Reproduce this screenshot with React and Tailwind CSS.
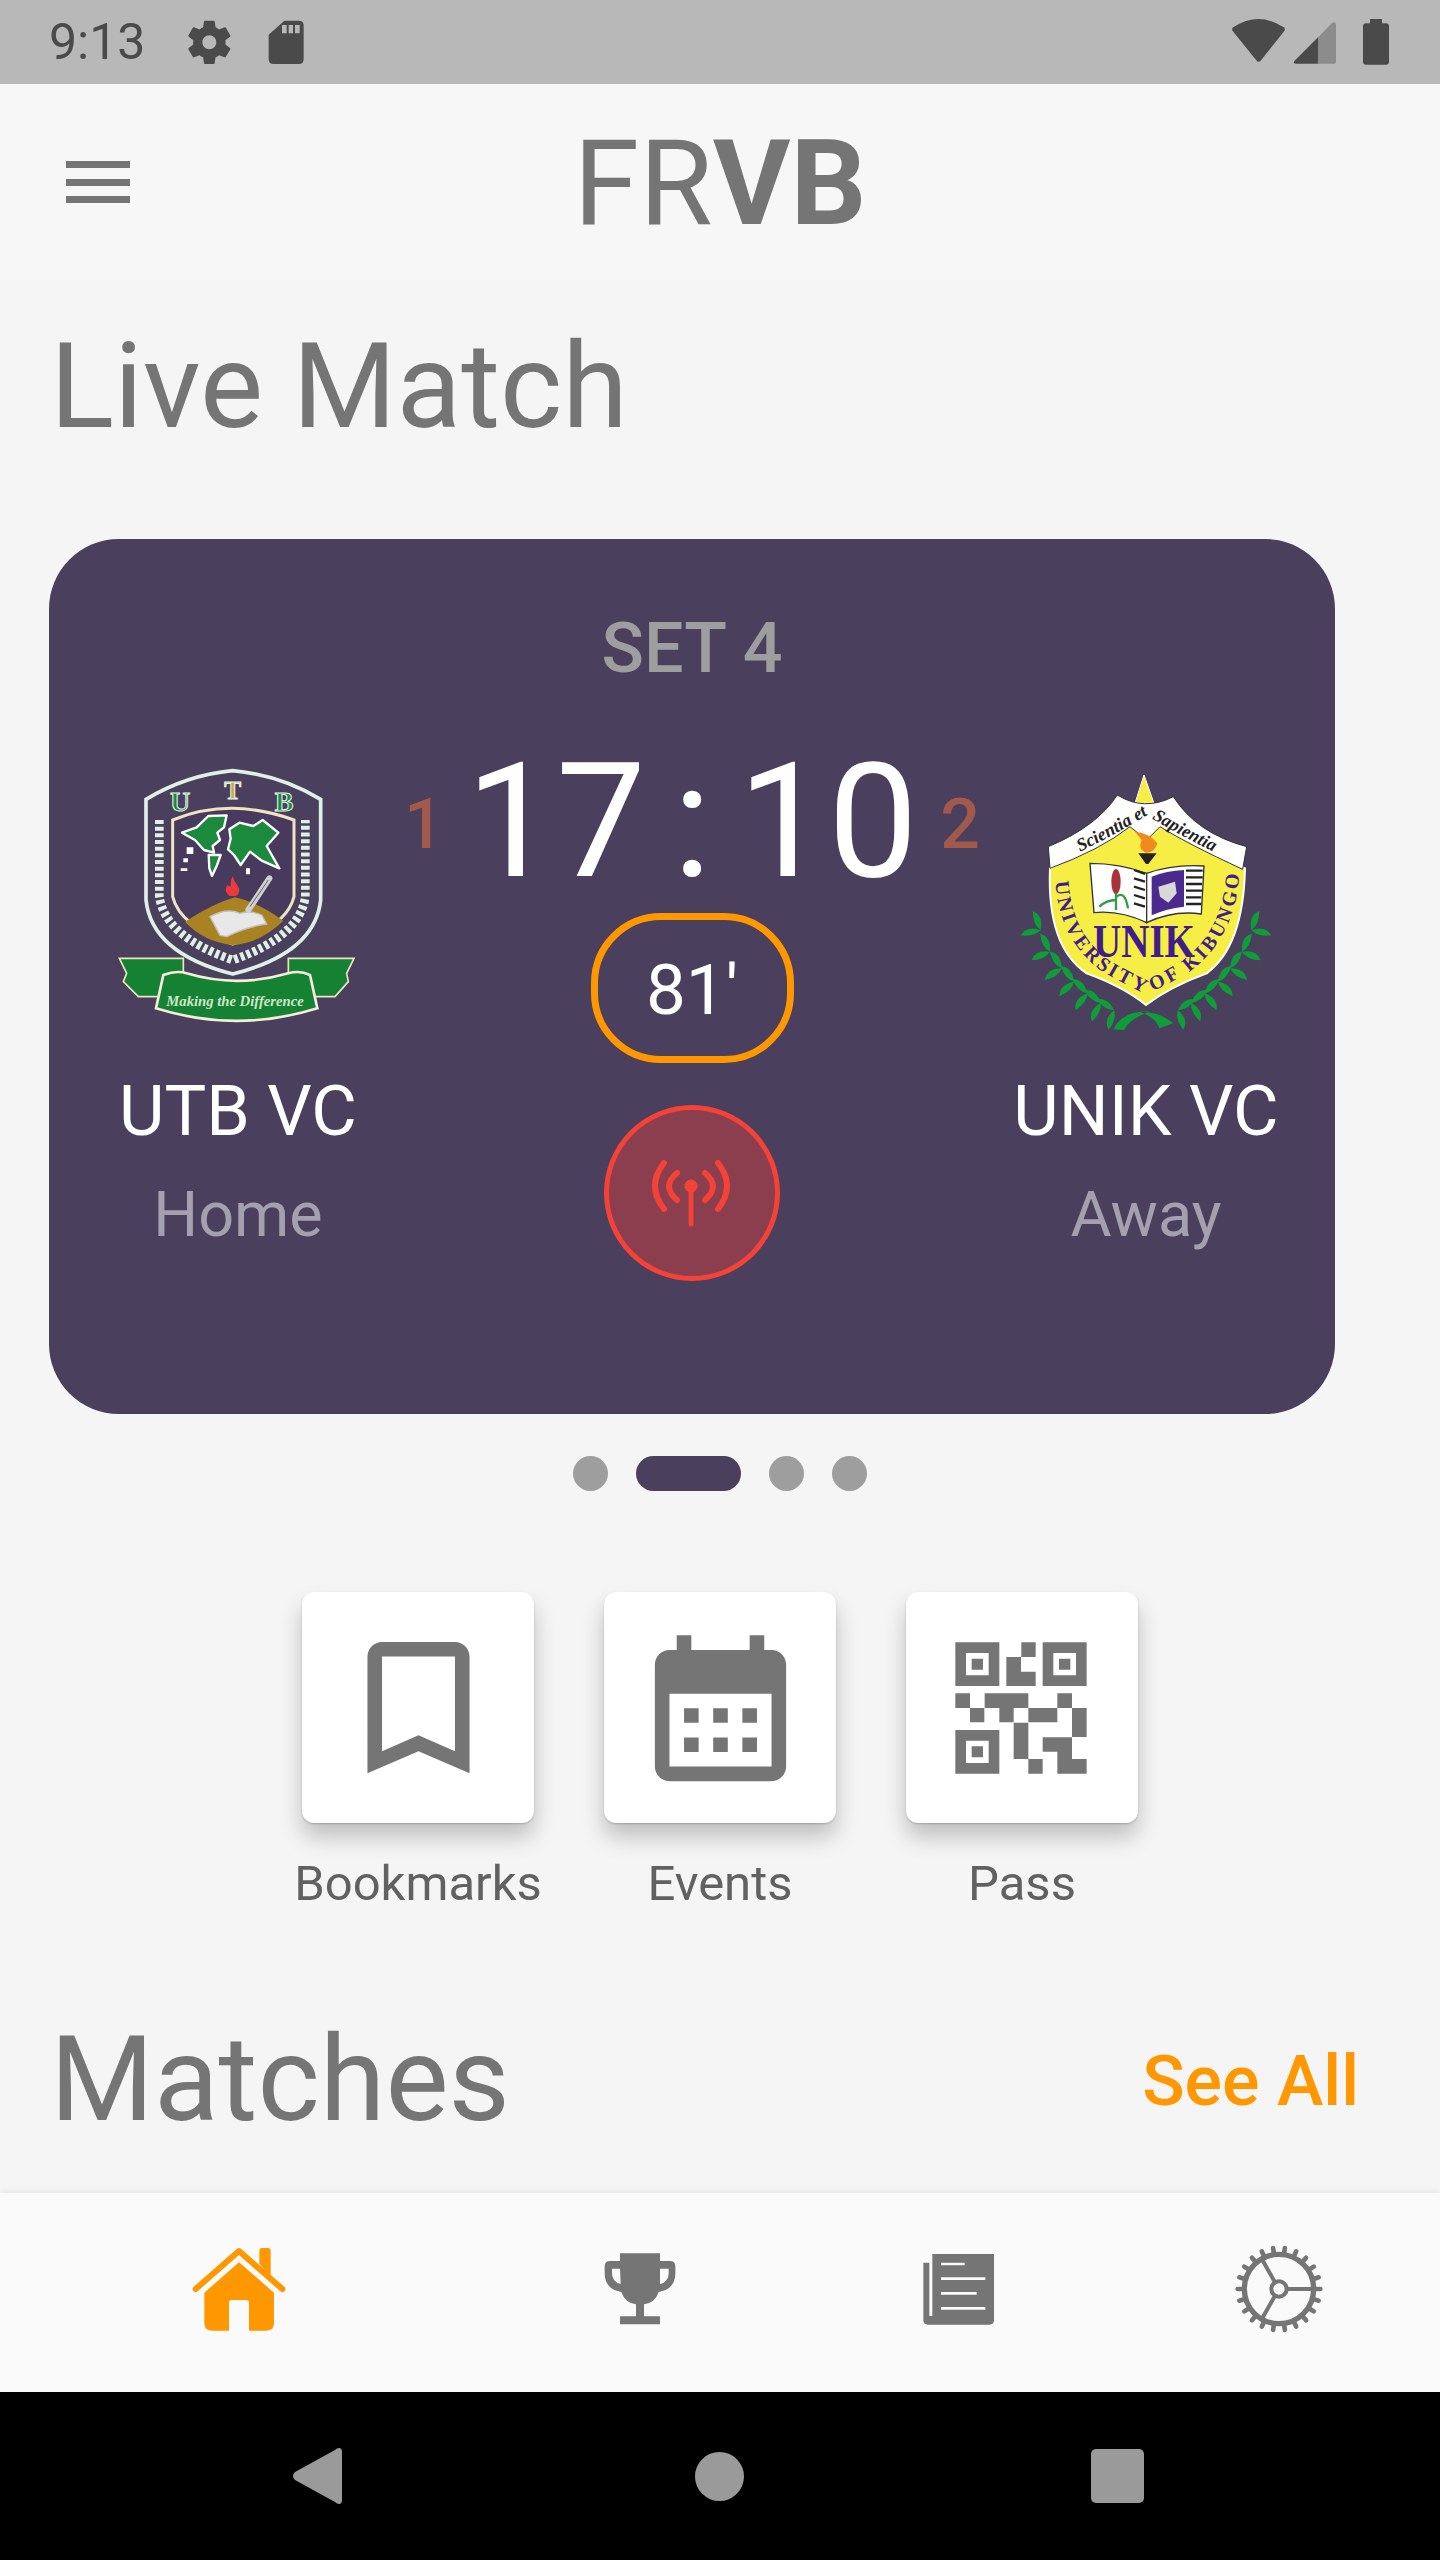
const GEAR = "M19.14,12.94c0.04-0.3,0.06-0.61,0.06-0.94c0-0.32-0.02-0.64-0.07-0.94l2.03-1.58c0.18-0.14,0.23-0.41,0.12-0.61 l-1.92-3.32c-0.12-0.22-0.37-0.29-0.59-0.22l-2.39,0.96c-0.5-0.38-1.03-0.7-1.62-0.94L14.4,2.81c-0.04-0.24-0.24-0.41-0.48-0.41 h-3.84c-0.24,0-0.43,0.17-0.47,0.41L9.25,5.35C8.66,5.59,8.12,5.92,7.63,6.29L5.24,5.33c-0.22-0.08-0.47,0-0.59,0.22L2.74,8.87 C2.62,9.08,2.66,9.34,2.86,9.48l2.03,1.58C4.84,11.36,4.8,11.69,4.8,12s0.02,0.64,0.07,0.94l-2.03,1.58 c-0.18,0.14-0.23,0.41-0.12,0.61l1.92,3.32c0.12,0.22,0.37,0.29,0.59,0.22l2.39-0.96c0.5,0.38,1.03,0.7,1.62,0.94l0.36,2.54 c0.05,0.24,0.24,0.41,0.48,0.41h3.84c0.24,0,0.44-0.17,0.47-0.41l0.36-2.54c0.59-0.24,1.13-0.56,1.62-0.94l2.39,0.96 c0.22,0.08,0.47,0,0.59-0.22l1.92-3.32c0.12-0.22,0.07-0.47-0.12-0.61L19.14,12.94z M12,15.1c-1.71,0-3.1-1.39-3.1-3.1 s1.39-3.1,3.1-3.1s3.1,1.39,3.1,3.1S13.71,15.1,12,15.1z";

function StatusLeftIcons() {
  return (
    <svg width="150" height="84" viewBox="450 0 450 252" fill="#4a4a4a">
      <path d={GEAR} fillRule="evenodd" transform="translate(538,127) scale(6.75) translate(-12,-12)" />
      <path fillRule="evenodd" d="M763 62 H807 q14 0 14 14 V178 q0 14 -14 14 H730 q-14 0 -14 -14 V104 Z M756 75 V100 H770 V75 Z M776 75 V100 H789 V75 Z M795 75 V100 H809 V75 Z" />
    </svg>
  );
}

function StatusRightIcons() {
  return (
    <svg width="230" height="84" viewBox="0 0 690 252">
      <path fill="#4a4a4a" d="M70 82 Q145 32 221 82 q6 5 2 11 L152 182 q-6 6 -12 0 L68 93 q-4 -6 2 -11 Z" />
      <path fill="#8c8c8c" d="M324 112 L366 69 q12 -6 12 6 V185 q0 6 -6 6 H324 Z" />
      <path fill="#4a4a4a" d="M324 112 V191 H258 q-10 0 -5 -8 Z" />
      <path fill="#4a4a4a" d="M480 57 H516 V70 H528 q9 0 9 9 V185 q0 9 -9 9 H468 q-9 0 -9 -9 V79 q0 -9 9 -9 H480 Z" />
    </svg>
  );
}

function UtbLogo() {
  return (
    <svg width="320" height="300" viewBox="-6 0 960 900">
      <g fill="none" stroke="#dff0e4">
        <path strokeWidth="11" d="M198 178 Q320 105 458 92 Q600 105 722 178 V480 Q705 640 458 702 Q215 640 198 480 Z" />
        <path strokeWidth="26" strokeDasharray="12 8" d="M238 240 V470 Q255 590 458 660 Q660 590 676 470 V240" />
      </g>
      <path d="M278 240 Q450 170 642 240 V470 Q620 560 458 612 Q300 560 278 470 Z" fill="#473a5c" stroke="#efe3c4" strokeWidth="9" />
      <text x="300" y="212" fontFamily="'Liberation Serif', serif" fontWeight="700" fontSize="84" fill="#1b8a3c" stroke="#e9f5ec" strokeWidth="3" textAnchor="middle">U</text>
      <text x="458" y="176" fontFamily="'Liberation Serif', serif" fontWeight="700" fontSize="76" fill="#c9a94a" stroke="#e9f5ec" strokeWidth="3" textAnchor="middle">T</text>
      <text x="612" y="214" fontFamily="'Liberation Serif', serif" fontWeight="700" fontSize="84" fill="#1b8a3c" stroke="#e9f5ec" strokeWidth="3" textAnchor="middle">B</text>
      <g fill="#1b8a3c" stroke="#ffffff" strokeWidth="7" strokeLinejoin="round">
        <path d="M306 278 L350 262 L385 228 L440 226 L432 262 L412 278 L420 300 L398 318 L402 338 L372 330 L345 300 Z" />
        <path d="M386 345 L422 345 L410 378 L396 408 L388 385 Z" />
        <path d="M448 268 L478 248 L520 258 L548 240 L595 278 L560 318 L598 385 L545 362 L510 335 L482 375 L462 345 L444 328 L452 296 Z" />
      </g>
      <path d="M320 322 h20 v20 h-20z M310 355 h14 v12 h-14z M302 385 h20 v8 h-20z M498 385 h12 v18 h-12z" fill="#ffffff" />
      <path d="M458 408 q4 18 14 28 q14 18 -4 32 h-20 q-18 -16 -6 -34 q6 8 10 4 q-2 -14 6 -30 Z" fill="#ec3a3f" />
      <path d="M315 545 Q400 490 465 472 Q530 485 610 542 Q540 610 458 615 Q370 605 315 545 Z" fill="#a98322" />
      <path d="M390 530 Q440 502 480 520 Q510 510 545 525 L560 552 Q500 560 440 590 L420 586 Z" fill="#e8e8e8" stroke="#bfbfbf" strokeWidth="4" />
      <path d="M505 510 L568 415" stroke="#cfcfcf" strokeWidth="18" strokeLinecap="round" />
      <path d="M510 500 L565 420" stroke="#666666" strokeWidth="3" />
      <path d="M118 655 H310 V770 H175 L130 725 L140 700 Z" fill="#158233" stroke="#efe3c4" strokeWidth="5" />
      <path d="M822 655 H625 V770 H765 L805 725 L800 700 Z" fill="#158233" stroke="#efe3c4" strokeWidth="5" />
      <path d="M250 705 Q290 690 320 700 Q470 745 625 700 Q660 690 690 705 L712 805 Q470 880 228 805 Z" fill="#158233" stroke="#f5eeda" strokeWidth="8" />
      <text x="465" y="797" fontFamily="'Liberation Serif', serif" fontStyle="italic" fontWeight="700" fontSize="44" fill="#cfe6c8" textAnchor="middle">Making the Difference</text>
    </svg>
  );
}

function Leaf({ x, y, r }) {
  return <path d="M0 0 Q14 -24 56 -26 Q44 7 0 0 Z" fill="#0f9d3a" transform={`translate(${x},${y}) rotate(${r})`} />;
}

function UnikLogo() {
  const stems = [[122, 570], [150, 635], [185, 685], [222, 725], [262, 760], [302, 788], [342, 810]];
  const leaves = (
    <g>
      {stems.map(([x, y], i) => <Leaf key={`a${i}`} x={x} y={y} r={-88 - i * 6} />)}
      {stems.map(([x, y], i) => <Leaf key={`b${i}`} x={x} y={y} r={190 - i * 10} />)}
    </g>
  );
  return (
    <svg width="300" height="300" viewBox="-12 0 900 900">
      {leaves}
      <g transform="translate(876,0) scale(-1,1)">{leaves}</g>
      <path d="M340 868 Q370 810 450 815 Q390 835 372 870 Z M520 850 Q480 815 420 815 Q470 835 478 865 Z" fill="#0f9d3a" />
      <path d="M432 105 L462 190 H405 Z" fill="#f7ee45" stroke="#ffffff" strokeWidth="3" />
      <path d="M150 385 Q140 620 260 700 Q370 740 438 795 Q510 740 620 700 Q730 620 735 385 L480 260 H390 Z" fill="#f7ee45" stroke="#ffffff" strokeWidth="6" />
      <path d="M145 320 Q290 260 352 165 Q432 215 520 170 Q590 280 740 320 L728 388 Q560 310 480 260 L440 300 L390 260 Q300 330 150 385 Z" fill="#ffffff" stroke="#333333" strokeWidth="3" />
      <defs>
        <path id="motto" d="M170 368 Q320 300 440 226 Q560 300 710 368" />
        <path id="uni" d="M165 405 Q170 590 300 690 Q375 735 438 762 Q505 735 575 690 Q705 590 718 405" />
      </defs>
      <text fontFamily="'Liberation Serif', serif" fontStyle="italic" fontWeight="700" fontSize="54" fill="#222222">
        <textPath href="#motto" startOffset="50%" textAnchor="middle">Scientia et Sapientia</textPath>
      </text>
      <path d="M270 370 Q360 370 440 400 V548 Q360 510 282 518 Z" fill="#ffffff" stroke="#333333" strokeWidth="4" />
      <path d="M612 378 Q520 372 440 400 V548 Q520 510 604 522 Z" fill="#ffffff" stroke="#333333" strokeWidth="4" />
      <path d="M455 410 Q500 392 552 390 V500 Q500 505 455 526 Z" fill="#4b2a8e" />
      <path d="M475 440 L525 425 L530 460 L505 488 L480 470 Z" fill="#d8d8d8" />
      <g stroke="#222222" strokeWidth="7">
        <path d="M402 390 L435 402 M402 415 L435 425 M402 440 L435 450 M402 465 L435 475 M402 490 L435 500" />
        <path d="M558 392 H608 M558 412 H608 M558 432 H606 M558 452 H606 M558 472 H604 M558 492 H604" />
      </g>
      <ellipse cx="348" cy="425" rx="14" ry="38" fill="#a8323a" />
      <path d="M348 460 V510 M348 480 Q320 480 298 500 M350 470 Q375 450 384 505" stroke="#2f9e44" strokeWidth="7" fill="none" />
      <path d="M415 340 H470 L445 372 H438 Z" fill="#222222" />
      <path d="M405 275 Q450 280 472 310 Q465 338 440 338 Q412 330 425 300 Z" fill="#f08a1d" />
      <text x="432" y="650" fontFamily="'Liberation Serif', serif" fontWeight="700" fontSize="140" fill="#3f1d8a" textAnchor="middle" textLength="306" lengthAdjust="spacingAndGlyphs">UNIK</text>
      <text fontFamily="'Liberation Serif', serif" fontWeight="700" fontSize="60" fill="#3f1d8a">
        <textPath href="#uni" startOffset="2%" textLength="950">UNIVERSITY OF KIBUNGO</textPath>
      </text>
    </svg>
  );
}

function LiveIcon() {
  return (
    <svg width="96" height="96" viewBox="644 1145 96 96" fill="none" stroke="#f44336" strokeLinecap="round">
      <path strokeWidth="6" d="M664 1163 Q646 1186 664 1209 M718 1163 Q736 1186 718 1209 M677 1173 Q661 1186 677 1200 M705 1173 Q721 1186 705 1200" />
      <circle cx="691" cy="1186" r="6.5" fill="#f44336" stroke="none" />
      <path strokeWidth="5" d="M691 1190 V1224" />
    </svg>
  );
}

function Team({ name, role, children }) {
  return (
    <div className="w-[340px] flex flex-col items-center pt-[201px]">
      {children}
      <div className="mt-[31px] text-[70px] leading-[80px] text-white whitespace-nowrap">{name}</div>
      <div className="mt-[24px] text-[63px] leading-[80px] text-[#a5a0ae] whitespace-nowrap">{role}</div>
    </div>
  );
}

function LiveCard() {
  return (
    <div className="w-[1286px] h-[875px] ml-[49px] mt-[96px] rounded-[70px] bg-[#4a3f5d] flex px-[19px]">
      <Team name="UTB VC" role="Home"><UtbLogo /></Team>
      <div className="w-[568px] flex flex-col items-center">
        <div className="mt-[69px] h-[80px] text-[70px] leading-[80px] font-medium text-[#9e9e9e]">SET 4</div>
        <div className="mt-[44px] w-[576px] h-[180px] flex items-center justify-between">
          <span className="text-[70px] leading-none font-medium text-[#a0594a] mt-[3px]">1</span>
          <span className="text-[160px] leading-[180px] text-white [word-spacing:-13px]">17 : 10</span>
          <span className="text-[70px] leading-none font-medium text-[#a0594a] mt-[3px]">2</span>
        </div>
        <div className="mt-[1px] w-[203px] h-[150px] rounded-[70px] border-[7px] border-[#ff9800] flex items-center justify-center pt-[4px] text-[71px] text-white">81'</div>
        <div className="mt-[42px] w-[176px] h-[176px] rounded-full border-[5px] border-[#f44336] bg-[#8b3f4e] flex items-center justify-center">
          <LiveIcon />
        </div>
      </div>
      <Team name="UNIK VC" role="Away"><UnikLogo /></Team>
    </div>
  );
}

function Dots() {
  return (
    <div className="mt-[42px] ml-[573px] flex gap-[28px]">
      <div className="w-[35px] h-[35px] rounded-full bg-[#9e9e9e]" />
      <div className="w-[105px] h-[35px] rounded-full bg-[#4a3f5d]" />
      <div className="w-[35px] h-[35px] rounded-full bg-[#9e9e9e]" />
      <div className="w-[35px] h-[35px] rounded-full bg-[#9e9e9e]" />
    </div>
  );
}

function QuickAction({ label, children }) {
  return (
    <div className="w-[232px] flex flex-col items-center">
      <div className="w-[232px] h-[231px] rounded-[12px] bg-white shadow-[0_14px_22px_rgba(0,0,0,0.22),0_1px_2px_rgba(0,0,0,0.2)] flex items-center justify-center">
        {children}
      </div>
      <div className="mt-[37px] text-[49px] leading-[48px] text-[#616161] whitespace-nowrap">{label}</div>
    </div>
  );
}

function BookmarkIcon() {
  return (
    <svg width="175" height="175" viewBox="0 0 24 24" fill="#757575">
      <path d="M17 3H7c-1.1 0-2 .9-2 2v16l7-3 7 3V5c0-1.1-.9-2-2-2zm0 15l-5-2.18L7 18V5h10v13z" />
    </svg>
  );
}

function CalendarIcon() {
  return (
    <svg width="175" height="175" viewBox="0 0 24 24" fill="#757575" className="mt-[16px]">
      <path fillRule="evenodd" d="M19 3h-1V1h-2v2H8V1H6v2H5C3.9 3 3 3.9 3 5v14c0 1.1.9 2 2 2h14c1.1 0 2-.9 2-2V5c0-1.1-.9-2-2-2zm0 16H5V9h14v10z" />
      <path d="M7 11h2v2H7zM11 11h2v2h-2zM15 11h2v2h-2zM7 15h2v2H7zM11 15h2v2h-2zM15 15h2v2h-2z" />
    </svg>
  );
}

function QrIcon() {
  return (
    <svg width="165" height="165" viewBox="0 0 495 495" fill="#757575">
      <path fillRule="evenodd" d="M46 52H178V183H46Z M78 84V151H146V84Z M95 101H129V134H95Z" />
      <path fillRule="evenodd" d="M308 52H440V183H308Z M340 84V151H408V84Z M357 101H391V134H357Z" />
      <path fillRule="evenodd" d="M46 315H178V446H46Z M78 347V414H146V347Z M95 364H129V397H95Z" />
      <path d="M244 52H287V96H244Z M199 96H243V140H287V183H199Z M46 205H90V249H46Z M90 249H133V292H90Z M134 205H265V249H221V292H178V249H134Z M265 249H352V292H265Z M352 205H396V249H352Z M396 249H440V336H396Z M221 293H265V402H221Z M265 402H308V446H265Z M308 337H396V402H440V446H352V380H308Z" />
    </svg>
  );
}

function HomeIcon() {
  return (
    <svg width="100" height="130" viewBox="57 0 300 390" fill="#ff9800">
      <path d="M103 218 L207 127 L312 218 V310 q0 22 -22 22 H237 V248 q0 -8 -8 -8 H185 q-8 0 -8 8 V332 H125 q-22 0 -22 -22 Z" />
      <path d="M268 130 V92 q0 -8 8 -8 h18 q8 0 8 8 V172 Z" />
      <path d="M77 207 L207 93 L337 207" fill="none" stroke="#ff9800" strokeWidth="18" strokeLinecap="round" strokeLinejoin="round" />
    </svg>
  );
}

function TrophyIcon() {
  return (
    <svg width="80" height="130" viewBox="1290 0 240 390" fill="#757575">
      <path fillRule="evenodd" d="M1350 100 H1470 V123 H1500 q16 0 16 16 V160 q0 48 -50 56 q-12 34 -44 37 V289 H1470 V313 H1350 V289 H1398 V253 q-32 -3 -44 -37 q-50 -8 -50 -56 V139 q0 -16 16 -16 H1350 Z M1350 146 H1326 V160 q0 26 26 32 L1350 146 Z M1470 146 V192 q26 -6 26 -32 V146 Z" />
    </svg>
  );
}

function NewsIcon() {
  return (
    <svg width="80" height="130" viewBox="57 0 240 390" fill="#757575">
      <path d="M97 102 H282 V300 q0 14 -14 14 H84 q-14 0 -14 -14 V128 H88 V288 H97 Z" />
      <path fill="#fafafa" d="M123 128 H194 V136 H123 Z M123 172 H256 V180 H123 Z M123 216 H230 V224 H123 Z M123 261 H256 V269 H123 Z" />
    </svg>
  );
}

function CogIcon() {
  const teeth = Array.from({ length: 22 }, (_, i) => i * (360 / 22));
  return (
    <svg width="100" height="130" viewBox="987 0 300 390" fill="none" stroke="#757575">
      <circle cx="1137" cy="207" r="104" strokeWidth="16" />
      {teeth.map((a) => (
        <path key={a} d="M1137 95 V83" strokeWidth="14" strokeLinecap="round" transform={`rotate(${a + 90} 1137 207)`} />
      ))}
      <circle cx="1137" cy="207" r="23" strokeWidth="12" />
      <path strokeWidth="12" d="M1160 207 H1235 M1125 187 L1085 116 M1125 227 L1085 298" />
    </svg>
  );
}

export default function App() {
  return (
    <div className="w-[1440px] h-[2560px] flex flex-col overflow-hidden bg-[#f5f5f5] font-['Roboto',sans-serif]">
      <div className="h-[84px] shrink-0 bg-[#b8b8b8] flex items-center justify-between">
        <div className="flex items-center pl-[49px]">
          <span className="w-[131px] text-[50px] leading-[84px] text-[#4a4a4a]">9:13</span>
          <StatusLeftIcons />
        </div>
        <StatusRightIcons />
      </div>

      <div className="h-[196px] shrink-0 bg-[#f7f7f7] relative flex items-center justify-center">
        <div className="absolute left-[66px] top-[77px] w-[64px] flex flex-col gap-[10.5px]">
          <div className="h-[7px] bg-[#757575]" />
          <div className="h-[7px] bg-[#757575]" />
          <div className="h-[7px] bg-[#757575]" />
        </div>
        <div className="mt-[3px] text-[119px] leading-none text-[#757575]">FR<span className="font-bold">VB</span></div>
      </div>

      <main className="flex-1 min-h-0">
        <h1 className="mt-[51px] ml-[50px] text-[119px] leading-[112px] font-normal text-[#757575]">Live Match</h1>
        <LiveCard />
        <Dots />
        <div className="mt-[101px] flex justify-center gap-[70px]">
          <QuickAction label="Bookmarks"><BookmarkIcon /></QuickAction>
          <QuickAction label="Events"><CalendarIcon /></QuickAction>
          <QuickAction label="Pass"><QrIcon /></QuickAction>
        </div>
        <div className="mt-[116px] pl-[50px] pr-[81px] flex items-center justify-between">
          <h2 className="text-[119px] leading-[112px] font-normal text-[#757575]">Matches</h2>
          <a className="text-[70px] font-medium text-[#ff9800] mt-[2px]">See All</a>
        </div>
      </main>

      <nav className="h-[199px] shrink-0 bg-[#fafafa] shadow-[0_-2px_6px_rgba(0,0,0,0.06)] flex items-start pt-[27px] pl-[189px]">
        <HomeIcon />
        <div className="ml-[311px]"><TrophyIcon /></div>
        <div className="ml-[239px]"><NewsIcon /></div>
        <div className="ml-[230px]"><CogIcon /></div>
      </nav>

      <div className="h-[168px] shrink-0 bg-black flex items-center pl-[293px]">
        <svg width="49" height="56" viewBox="0 0 49 56" fill="#9a9a9a" className="mt-[-1px]">
          <path d="M46 0 q3 0 3 4 V52 q0 4 -3 4 q-2 0 -4 -2 L2 32 q-4 -4 0 -8 L42 2 q2 -2 4 -2 Z" />
        </svg>
        <div className="ml-[353px] w-[49px] h-[49px] rounded-full bg-[#9a9a9a]" />
        <div className="ml-[347px] w-[53px] h-[54px] rounded-[5px] bg-[#9a9a9a]" />
      </div>
    </div>
  );
}
